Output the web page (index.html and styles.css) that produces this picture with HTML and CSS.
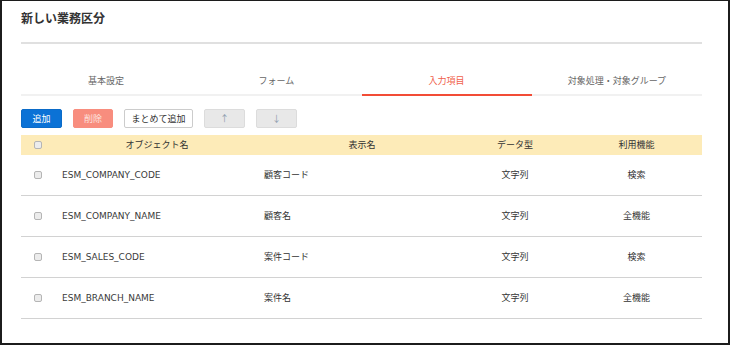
FILE: index.html
```html
<!DOCTYPE html>
<html>
  <head>
    <title>新しい業務区分</title>
    <meta charset="utf-8" />
    <link rel="stylesheet" href="styles.css">
  </head>
  <body>
    <div class="frame">
      <h1 class="title">新しい業務区分</h1>
      <div class="rule"></div>

      <ul class="tabs">
        <li>基本設定</li>
        <li>フォーム</li>
        <li class="active">入力項目</li>
        <li>対象処理・対象グループ</li>
      </ul>

      <div class="toolbar">
        <button class="btn add">追加</button>
        <button class="btn del">削除</button>
        <button class="btn bulk">まとめて追加</button>
        <button class="btn move">↑</button>
        <button class="btn move">↓</button>
      </div>

      <div class="grid">
        <div class="row head">
          <span class="cell chk"><span class="box"></span></span>
          <span class="cell c">オブジェクト名</span>
          <span class="cell c">表示名</span>
          <span class="cell c">データ型</span>
          <span class="cell c">利用機能</span>
        </div>
        <div class="row">
          <span class="cell chk"><span class="box"></span></span>
          <span class="cell name">ESM_COMPANY_CODE</span>
          <span class="cell">顧客コード</span>
          <span class="cell c">文字列</span>
          <span class="cell c">検索</span>
        </div>
        <div class="row">
          <span class="cell chk"><span class="box"></span></span>
          <span class="cell name">ESM_COMPANY_NAME</span>
          <span class="cell">顧客名</span>
          <span class="cell c">文字列</span>
          <span class="cell c">全機能</span>
        </div>
        <div class="row">
          <span class="cell chk"><span class="box"></span></span>
          <span class="cell name">ESM_SALES_CODE</span>
          <span class="cell">案件コード</span>
          <span class="cell c">文字列</span>
          <span class="cell c">検索</span>
        </div>
        <div class="row">
          <span class="cell chk"><span class="box"></span></span>
          <span class="cell name">ESM_BRANCH_NAME</span>
          <span class="cell">案件名</span>
          <span class="cell c">文字列</span>
          <span class="cell c">全機能</span>
        </div>
      </div>
    </div>
  </body>
</html>
```

FILE: styles.css
```css
* {
  box-sizing: border-box;
}

body {
  margin: 0;
  background: #fff;
  color: #333;
  font: 9px/14px "DejaVu Sans", "Noto Sans CJK JP", sans-serif;
}

.frame {
  width: 730px;
  height: 345px;
  border: 2px solid #1c1c1c;
  border-top-width: 1px;
  padding: 0 26px 0 19px;
}

.title {
  margin: 7px 0 0 0;
  font: bold 12px/20px "Noto Sans CJK JP", sans-serif;
  color: #333;
}

.rule {
  margin-top: 14px;
  height: 2px;
  background: #e0e0e0;
}

.tabs {
  display: flex;
  list-style: none;
  margin: 30px 0 0 0;
  padding: 0;
}

.tabs li {
  flex: 1;
  text-align: center;
  padding-bottom: 6px;
  border-bottom: 2px solid #f1f1f1;
  color: #666;
  font-family: "Noto Sans CJK JP", sans-serif;
}

.tabs li.active {
  color: #f0614b;
  border-bottom-color: #f24c36;
}

.toolbar {
  display: flex;
  gap: 11px;
  margin-top: 13px;
}

.btn {
  height: 19px;
  padding: 0;
  border: 1px solid #ccc;
  border-radius: 2px;
  font: 9px/17px "Noto Sans CJK JP", sans-serif;
  color: #333;
  background: #fff;
}

.add {
  width: 41px;
  background: #0b72d6;
  border-color: #0b6bc8;
  color: #fff;
}

.del {
  width: 40px;
  background: #f88d7e;
  border-color: #f88d7e;
  color: #fde3de;
}

.bulk {
  width: 69px;
}

.move {
  width: 41px;
  background: #e8e8e8;
  border-color: #dcdcdc;
  color: #8b9cac;
}

.grid {
  margin-top: 7px;
}

.row {
  display: grid;
  grid-template-columns: 29px 214px 196px 110px 133px;
  align-items: center;
  height: 41px;
  border-bottom: 1px solid #d2d2d2;
}

.row.head {
  height: 20px;
  background: #fdebb8;
  border-bottom: 0;
}

.cell {
  font-family: "Noto Sans CJK JP", sans-serif;
}

.cell.c {
  text-align: center;
}

.cell.name {
  padding-left: 12px;
  font-family: "DejaVu Sans", sans-serif;
  color: #3a3a3a;
}

.chk {
  display: flex;
  padding-left: 13px;
}

.box {
  width: 8px;
  height: 8px;
  border: 1px solid #b5b5b5;
  border-radius: 2px;
  background: #ececec;
}
```
